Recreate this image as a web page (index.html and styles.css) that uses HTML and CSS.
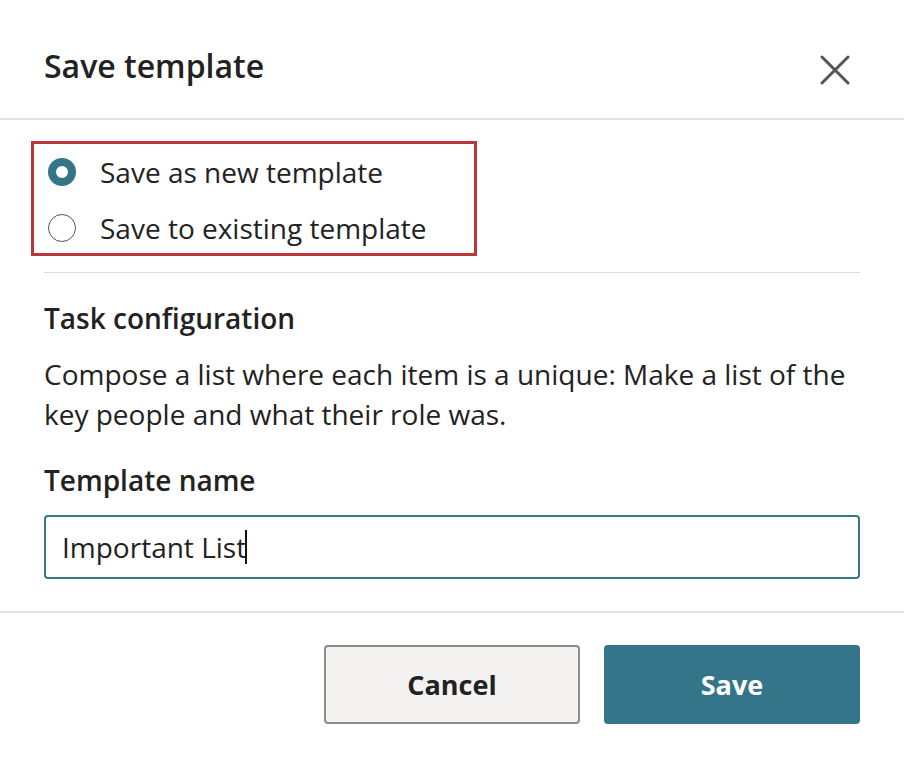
FILE: index.html
```html
<!DOCTYPE html>
<html lang="en">
<head>
<meta charset="utf-8">
<title>Save template</title>
<link rel="stylesheet" href="styles.css">
</head>
<body>
<div class="dialog">
  <header class="header">
    <h1 class="title">Save template</h1>
    <button class="close" aria-label="Close">
      <svg width="30" height="30" viewBox="0 0 30 30"><path d="M2 2 L28 28 M28 2 L2 28" stroke="#555" stroke-width="3" stroke-linecap="round" fill="none"/></svg>
    </button>
  </header>
  <main class="body">
    <div class="choice-box">
      <label class="radio-row"><span class="radio checked"></span><span class="radio-label">Save as new template</span></label>
      <label class="radio-row"><span class="radio"></span><span class="radio-label">Save to existing template</span></label>
    </div>
    <hr class="divider">
    <h2 class="section-title">Task configuration</h2>
    <p class="desc">Compose a list where each item is a unique: Make a list of the key people and what their role was.</p>
    <h2 class="section-title name-title">Template name</h2>
    <div class="input"><span class="input-text">Important List</span><span class="caret"></span></div>
  </main>
  <footer class="footer">
    <button class="btn btn-cancel">Cancel</button>
    <button class="btn btn-save">Save</button>
  </footer>
</div>
</body>
</html>
```

FILE: styles.css
```css
* { box-sizing: border-box; }
html, body { margin: 0; padding: 0; background: #fff; }
body {
  font-family: "Open Sans", "Noto Sans", sans-serif;
  color: #222;
  width: 904px;
  height: 770px;
  overflow: hidden;
}
.header {
  display: flex;
  justify-content: space-between;
  align-items: flex-start;
  padding: 46px 44px 0 44px;
  height: 120px;
  border-bottom: 2px solid #e2e2e2;
}
.title {
  margin: 0;
  font-size: 32px;
  line-height: 40px;
  font-weight: 600;
  color: #222;
}
.close {
  border: 0;
  background: none;
  padding: 0;
  margin: 9px 10px 0 0;
  width: 30px;
  height: 30px;
  display: flex;
}
.body {
  padding: 21px 44px 0 44px;
}
.choice-box {
  margin-left: -13px;
  width: 446px;
  border: 3px solid #b9363a;
  padding: 8px 0 5px 14px;
  display: flex;
  flex-direction: column;
  gap: 16px;
}
.radio-row {
  display: flex;
  align-items: center;
  gap: 24px;
  height: 40px;
}
.radio {
  width: 28px;
  height: 28px;
  border-radius: 50%;
  border: 1.5px solid #555;
  flex: none;
}
.radio.checked {
  border: 8px solid #35758a;
  background: #fff;
}
.radio-label {
  font-size: 28px;
  line-height: 40px;
  color: #222;
}
.divider {
  border: 0;
  border-top: 1px solid #dcdcdc;
  margin: 16px 0 0 0;
  height: 0;
}
.section-title {
  margin: 27px 0 0 0;
  font-size: 28px;
  line-height: 36px;
  font-weight: 600;
  color: #222;
}
.desc {
  margin: 18px 0 0 0;
  font-size: 28px;
  line-height: 40px;
  color: #222;
}
.name-title {
  margin-top: 28px;
}
.input {
  margin-top: 17px;
  height: 64px;
  border: 2px solid #3a7588;
  border-radius: 4px;
  padding: 0 16px;
  display: flex;
  align-items: center;
  font-size: 28px;
  color: #222;
}
.caret {
  width: 2px;
  height: 34px;
  background: #111;
  margin-left: -1px;
}
.footer {
  margin-top: 32px;
  border-top: 2px solid #e2e2e2;
  padding: 32px 44px 0 0;
  display: flex;
  justify-content: flex-end;
  gap: 24px;
}
.btn {
  width: 256px;
  height: 79px;
  border-radius: 4px;
  font-family: "Open Sans", "Noto Sans", sans-serif;
  font-size: 27px;
  font-weight: 700;
  cursor: pointer;
}
.btn-cancel {
  background: #f4f3f2;
  border: 2px solid #8e8c89;
  color: #222;
}
.btn-save {
  background: #35758a;
  border: 0;
  color: #fff;
}
```
